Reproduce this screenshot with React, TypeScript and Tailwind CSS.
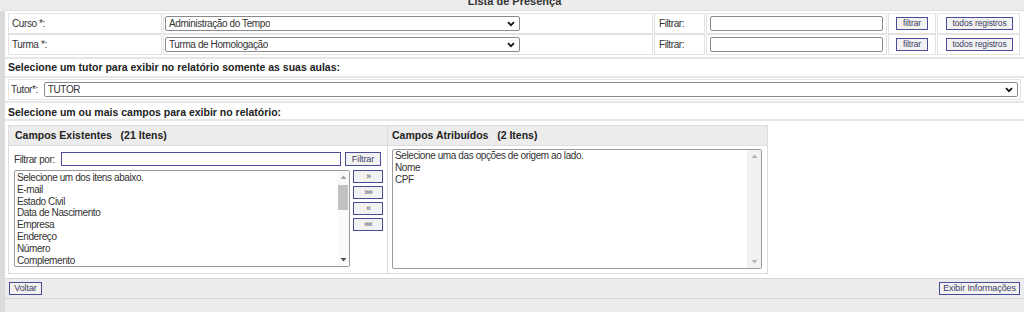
const camposExistentes = [
  "Selecione um dos itens abaixo.",
  "E-mail",
  "Estado Civil",
  "Data de Nascimento",
  "Empresa",
  "Endereço",
  "Número",
  "Complemento",
];

const camposAtribuidos = ["Selecione uma das opções de origem ao lado.", "Nome", "CPF"];

function Chevron() {
  return (
    <svg width="8" height="6" viewBox="0 0 8 6" className="shrink-0">
      <path d="M1 1.2 L4 4.2 L7 1.2" fill="none" stroke="#111" strokeWidth="1.7" />
    </svg>
  );
}

function FakeSelect({ value, className }: { value: string; className: string }) {
  return (
    <div
      className={`flex h-[15px] items-center justify-between rounded-[2px] border border-[#8a8a8a] bg-white pl-[3px] pr-[4px] ${className}`}
    >
      <span className="truncate">{value}</span>
      <Chevron />
    </div>
  );
}

function Btn({ label, className }: { label: string; className: string }) {
  return (
    <button
      className={`flex h-[13px] items-center justify-center border border-[#4b4b9c] bg-[#f2f2f2] text-[8.5px] leading-none tracking-[-0.1px] text-[#3d3d66] ${className}`}
    >
      {label}
    </button>
  );
}

function Cell({ children, className = "" }: { children?: React.ReactNode; className?: string }) {
  return (
    <div className={`flex h-[21px] items-center border border-[#e3e3e3] px-[3px] ${className}`}>{children}</div>
  );
}

function Arrow({ up, color }: { up: boolean; color: string }) {
  return (
    <svg width="7" height="4" viewBox="0 0 7 4">
      <path d={up ? "M0.5 4 L3.5 0.5 L6.5 4 Z" : "M0.5 0 L3.5 3.5 L6.5 0 Z"} fill={color} />
    </svg>
  );
}

export default function App() {
  return (
    <div className="flex h-[312px] w-[1024px] overflow-hidden bg-[#ececec] font-['Liberation_Sans',Arial,sans-serif] text-[10px] tracking-[-0.4px] text-[#333]">
      {/* left strip */}
      <div className="flex w-[5px] flex-col">
        <div className="h-[11px] bg-[#ececec]" />
        <div className="flex-1 bg-[#dbdbdb]" />
      </div>

      <div className="flex flex-1 flex-col">
        {/* title */}
        <div className="h-[11px] overflow-hidden border-b border-[#dedede] bg-[#ececec] text-center">
          <div className="mt-[-5px] text-[11px] leading-[12px] font-bold tracking-normal text-[#333]">
            Lista de Presença
          </div>
        </div>

        {/* curso / turma */}
        <div className="border-b-2 border-[#e6e6e6] bg-white px-[3px] py-[2px]">
          <div className="grid grid-cols-[154px_490px_51px_181px_48px_83px] gap-x-[1px]">
            {[
              ["Curso *:", "Administração do Tempo"],
              ["Turma *:", "Turma de Homologação"],
            ].map(([label, value]) => (
              <div key={label} className="contents">
                <Cell className="pl-[3px]">{label}</Cell>
                <Cell className="pl-[1px]">
                  <FakeSelect value={value} className="w-[355px]" />
                </Cell>
                <Cell className="pl-[4px]">Filtrar:</Cell>
                <Cell className="pl-[3px]">
                  <div className="h-[15px] w-[176px] rounded-[2px] border border-[#8a8a8a] bg-white" />
                </Cell>
                <Cell className="justify-center">
                  <Btn label="filtrar" className="w-[32px]" />
                </Cell>
                <Cell className="justify-start pl-[8px]">
                  <Btn label="todos registros" className="w-[67px]" />
                </Cell>
              </div>
            ))}
          </div>
        </div>

        {/* tutor */}
        <div className="flex h-[19px] items-center border-b-2 border-[#e6e6e6] bg-white px-[3px] text-[10.5px] font-bold tracking-normal text-[#222]">
          Selecione um tutor para exibir no relatório somente as suas aulas:
        </div>
        <div className="border-b-2 border-[#e6e6e6] bg-white px-[3px] pt-[1px] pb-[1px]">
          <div className="flex h-[21px] items-center gap-[6px] border border-[#e3e3e3] pr-[2px] pl-[2px]">
            <span>Tutor*:</span>
            <FakeSelect value="TUTOR" className="flex-1" />
          </div>
        </div>

        <div className="flex h-[18px] items-center border-b-2 border-[#e6e6e6] bg-white px-[3px] pt-[4px] text-[10.5px] font-bold tracking-normal text-[#222]">
          Selecione um ou mais campos para exibir no relatório:
        </div>

        {/* campos */}
        <div className="flex bg-white px-[3px] pt-[4px] pb-[4px]">
          <div className="grid w-[760px] grid-cols-2 border border-[#dcdcdc]">
            <div className="flex h-[20px] items-center border-r border-b border-[#dcdcdc] bg-[#ececec] pl-[6px] text-[10.5px] font-bold tracking-normal text-[#222]">
              Campos Existentes&nbsp;&nbsp;&nbsp;(21 Itens)
            </div>
            <div className="flex h-[20px] items-center border-b border-[#dcdcdc] bg-[#ececec] pl-[4px] text-[10.5px] font-bold tracking-normal text-[#222]">
              Campos Atribuídos&nbsp;&nbsp;&nbsp;(2 Itens)
            </div>

            {/* left body */}
            <div className="border-r border-[#dcdcdc] pt-[6px] pr-[4px] pb-[6px] pl-[5px]">
              <div className="flex h-[14px] items-center">
                <span className="w-[47px]">Filtrar por:</span>
                <div className="h-[14px] w-[280px] border border-[#4b4b9c] bg-white" />
                <Btn label="Filtrar" className="ml-[4px] h-[14px] w-[36px] text-[9px]" />
              </div>
              <div className="mt-[4px] flex">
                <div className="flex h-[97px] w-[336px] rounded-[2px] border border-[#9a9a9a] bg-white">
                  <div className="flex-1 overflow-hidden pt-[1px] pl-[2px] leading-[11.8px]">
                    {camposExistentes.map((c) => (
                      <div key={c}>{c}</div>
                    ))}
                  </div>
                  <div className="flex w-[12px] flex-col items-center bg-[#fafafa]">
                    <div className="flex h-[12px] items-center">
                      <Arrow up color="#a3a3a3" />
                    </div>
                    <div className="mt-[2px] h-[25px] w-[10px] bg-[#c1c1c1]" />
                    <div className="flex-1" />
                    <div className="flex h-[12px] items-center">
                      <Arrow up={false} color="#505050" />
                    </div>
                  </div>
                </div>
                <div className="ml-[3px] flex flex-col gap-[3px]">
                  {["»", "»»", "«", "««"].map((a) => (
                    <Btn key={a} label={a} className="h-[12px] w-[30px] text-[7px] tracking-[-1px]" />
                  ))}
                </div>
              </div>
            </div>

            {/* right body */}
            <div className="pt-[3px] pl-[4px]">
              <div className="flex h-[120px] w-[370px] rounded-[2px] border border-[#9a9a9a] bg-white">
                <div className="flex-1 overflow-hidden pl-[2px] leading-[12px]">
                  {camposAtribuidos.map((c) => (
                    <div key={c}>{c}</div>
                  ))}
                </div>
                <div className="flex w-[14px] flex-col items-center bg-[#f1f1f1]">
                  <div className="flex h-[12px] items-center">
                    <Arrow up color="#b5b5b5" />
                  </div>
                  <div className="flex-1" />
                  <div className="flex h-[12px] items-center">
                    <Arrow up={false} color="#b5b5b5" />
                  </div>
                </div>
              </div>
            </div>
          </div>
          <div className="flex-1" />
        </div>

        {/* footer */}
        <div className="flex h-[21px] items-center justify-between border-t border-b border-[#d6d6d6] bg-[#ececec] px-[4px]">
          <Btn label="Voltar" className="h-[13px] w-[33px] text-[9px]" />
          <Btn label="Exibir Informações" className="h-[13px] w-[81px] text-[9px]" />
        </div>
        <div className="flex-1 bg-[#ececec]" />
      </div>
    </div>
  );
}
